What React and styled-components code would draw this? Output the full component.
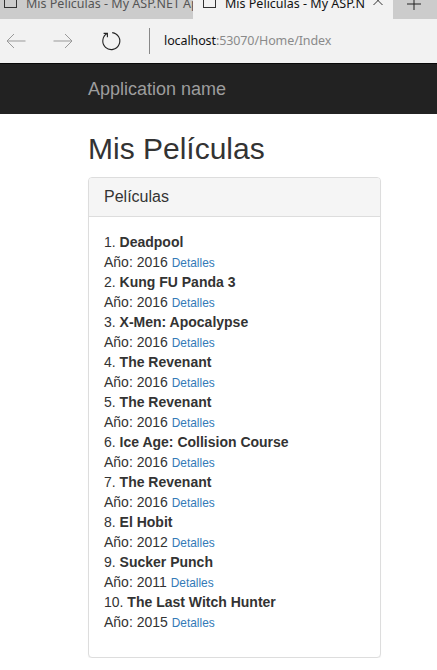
import React from "react";
import styled, { createGlobalStyle } from "styled-components";

const movies = [
  { title: "Deadpool", year: 2016 },
  { title: "Kung FU Panda 3", year: 2016 },
  { title: "X-Men: Apocalypse", year: 2016 },
  { title: "The Revenant", year: 2016 },
  { title: "The Revenant", year: 2016 },
  { title: "Ice Age: Collision Course", year: 2016 },
  { title: "The Revenant", year: 2016 },
  { title: "El Hobit", year: 2012 },
  { title: "Sucker Punch", year: 2011 },
  { title: "The Last Witch Hunter", year: 2015 },
];

export default function App() {
  return (
    <>
      <GlobalStyle />
      <TabStrip>
        <Tab>
          <TabIcon />
          <TabLabel>Mis Películas - My ASP.NET Application</TabLabel>
        </Tab>
        <Tab active>
          <TabIcon />
          <TabLabel>Mis Películas - My ASP.NET Application</TabLabel>
          <CloseIcon viewBox="0 0 10 10">
            <path d="M0.5 -4 L9.5 5 M9.5 -4 L0.5 5" />
          </CloseIcon>
        </Tab>
        <NewTab>
          <svg width="14" height="19" viewBox="0 0 14 19">
            <path d="M7 -6 V10 M0 4 H14" stroke="#222" strokeWidth="1" fill="none" />
          </svg>
        </NewTab>
      </TabStrip>
      <AddressBar>
        <NavButton>
          <svg width="20" height="16" viewBox="0 0 20 16">
            <path d="M19.5 8 H1 M8 1 L1 8 L8 15" stroke="#999" strokeWidth="1" fill="none" />
          </svg>
        </NavButton>
        <NavButton>
          <svg width="20" height="16" viewBox="0 0 20 16">
            <path d="M0.5 8 H19 M12 1 L19 8 L12 15" stroke="#999" strokeWidth="1" fill="none" />
          </svg>
        </NavButton>
        <NavButton>
          <svg width="22" height="22" viewBox="0 0 22 22">
            <path
              d="M7.2 3.6 A8.5 8.5 0 1 0 12.2 2.6"
              stroke="#222"
              strokeWidth="1.1"
              fill="none"
            />
            <path d="M3.6 3.4 L7.4 3.4 L7.4 7.2" stroke="#222" strokeWidth="1.1" fill="none" />
          </svg>
        </NavButton>
        <Divider />
        <Url>
          localhost<UrlRest>:53070/Home/Index</UrlRest>
        </Url>
      </AddressBar>

      <Navbar>
        <Brand href="#">Application name</Brand>
      </Navbar>

      <Container>
        <Title>Mis Películas</Title>
        <Panel>
          <PanelHeading>
            <PanelTitle>Películas</PanelTitle>
          </PanelHeading>
          <PanelBody>
            <MovieList>
              {movies.map((m, i) => (
                <Movie key={i}>
                  {i + 1}. <b>{m.title}</b>
                  <br />
                  Año: {m.year} <DetailLink href="#">Detalles</DetailLink>
                </Movie>
              ))}
            </MovieList>
          </PanelBody>
        </Panel>
      </Container>
    </>
  );
}

const GlobalStyle = createGlobalStyle`
  body {
    margin: 0;
    background: #fff;
    font-family: "Liberation Sans", Arial, sans-serif;
    font-size: 14px;
    line-height: 1.42857143;
    color: #333;
  }
`;

const TabStrip = styled.div`
  display: flex;
  height: 19px;
  overflow: hidden;
  background: #cccccc;
  font-family: "Noto Sans", "Open Sans", sans-serif;
  font-size: 12.5px;
`;

const Tab = styled.div`
  display: flex;
  align-items: center;
  height: 19px;
  box-sizing: border-box;
  flex: 0 0 ${(p) => (p.active ? "200px" : "193px")};
  padding-left: ${(p) => (p.active ? "10px" : "4px")};
  background: ${(p) => (p.active ? "#f2f2f2" : "#cccccc")};
  color: ${(p) => (p.active ? "#111" : "#555")};
  overflow: hidden;
`;

const TabIcon = styled.div`
  flex: 0 0 auto;
  width: 11px;
  height: 14px;
  border: 1px solid #333;
  margin-top: -20px;
  margin-right: 9px;
`;

const TabLabel = styled.div`
  flex: 1;
  white-space: nowrap;
  overflow: hidden;
  margin-top: -12px;
  line-height: 16px;
`;

const CloseIcon = styled.svg`
  flex: 0 0 auto;
  width: 10px;
  height: 10px;
  margin: -10px 10px 0 8px;
  stroke: #333;
  stroke-width: 1;
  fill: none;
`;

const NewTab = styled.div`
  flex: 1;
  display: flex;
  justify-content: center;
  align-items: flex-start;
  padding-right: 2px;
`;

const AddressBar = styled.div`
  display: flex;
  align-items: center;
  height: 44px;
  background: #f2f2f2;
  padding-left: 6px;
`;

const NavButton = styled.div`
  width: 47px;
  display: flex;
  align-items: center;
  justify-content: flex-start;
`;

const Divider = styled.div`
  width: 1px;
  height: 26px;
  background: #888;
  margin: 0 14px 0 2px;
`;

const Url = styled.div`
  font-family: "Noto Sans", "Open Sans", sans-serif;
  font-size: 12.5px;
  color: #111;
  letter-spacing: -0.1px;
`;

const UrlRest = styled.span`
  color: #8a8a8a;
`;

const Navbar = styled.nav`
  height: 50px;
  background: #222;
  border-top: 1px solid #080808;
  display: flex;
  align-items: center;
  padding-left: 88px;
`;

const Brand = styled.a`
  font-size: 18px;
  line-height: 20px;
  color: #9d9d9d;
  text-decoration: none;
`;

const Container = styled.div`
  margin-left: 88px;
  width: 293px;
`;

const Title = styled.h2`
  margin: 18px 0 12px;
  font-size: 30px;
  font-weight: 500;
  line-height: 1.1;
  color: #333;
`;

const Panel = styled.div`
  border: 1px solid #ddd;
  border-radius: 4px;
  background: #fff;
  box-shadow: 0 1px 1px rgba(0, 0, 0, 0.05);
`;

const PanelHeading = styled.div`
  padding: 10px 15px;
  background: #f5f5f5;
  border-bottom: 1px solid #ddd;
  border-radius: 3px 3px 0 0;
`;

const PanelTitle = styled.h3`
  margin: 0;
  font-size: 16px;
  font-weight: 500;
  line-height: 1.1;
  color: #333;
`;

const PanelBody = styled.div`
  padding: 15px;
`;

const MovieList = styled.div`
  margin-bottom: 10px;
`;

const Movie = styled.div`
  b {
    font-weight: bold;
  }
`;

const DetailLink = styled.a`
  font-size: 85%;
  color: #337ab7;
  text-decoration: none;
`;
